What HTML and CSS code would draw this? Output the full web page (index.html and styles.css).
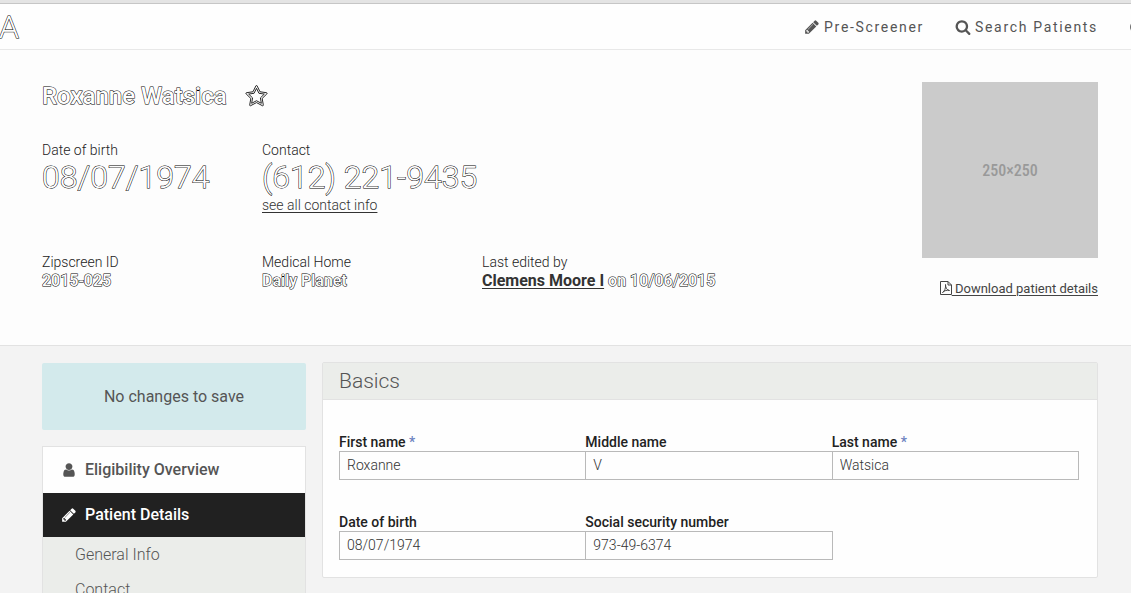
FILE: index.html
```html
<!DOCTYPE html>
<html lang="en">
<head>
<meta charset="utf-8">
<title>Patient Details</title>
<link rel="stylesheet" href="styles.css">
</head>
<body>
<svg class="sprite" aria-hidden="true">
  <symbol id="pencil" viewBox="0 0 1792 1792"><path d="M491 1536l91-91-235-235-91 91v107h128v128h107zm523-928q0-22-22-22-10 0-17 7l-542 542q-7 7-7 17 0 22 22 22 10 0 17-7l542-542q7-7 7-17zm-54-192l416 416-832 832h-416v-416zm683 96q0 53-37 90l-166 166-416-416 166-165q36-38 90-38 53 0 91 38l235 234q37 39 37 91z"/></symbol>
  <symbol id="search" viewBox="0 0 1792 1792"><path d="M1216 832q0-185-131.5-316.5t-316.5-131.5-316.5 131.5-131.5 316.5 131.5 316.5 316.5 131.5 316.5-131.5 131.5-316.5zm512 832q0 52-38 90t-90 38q-54 0-90-38l-343-342q-179 124-399 124-143 0-273.5-55.5t-225-150-150-225-55.5-273.5 55.5-273.5 150-225 225-150 273.5-55.5 273.5 55.5 225 150 150 225 55.5 273.5q0 220-124 399l343 343q37 37 37 90z"/></symbol>
  <symbol id="user" viewBox="0 0 1792 1792"><path d="M1536 1399q0 109-62.5 187t-150.5 78h-854q-88 0-150.5-78t-62.5-187q0-85 8.5-160.5t31.5-152 58.5-131 94-89 134.5-34.5q131 128 313 128t313-128q76 0 134.5 34.5t94 89 58.5 131 31.5 152 8.5 160.5zm-256-887q0 159-112.5 271.5t-271.5 112.5-271.5-112.5-112.5-271.5 112.5-271.5 271.5-112.5 271.5 112.5 112.5 271.5z"/></symbol>
  <symbol id="star" viewBox="0 0 1792 1792"><path d="M1201 1004l306-297-422-62-189-382-189 382-422 62 306 297-73 421 378-199 377 199zm527-357q0 22-26 48l-363 354 86 500q1 7 1 20 0 50-41 50-19 0-40-12l-449-236-449 236q-22 12-40 12-21 0-31.5-14.5t-10.5-35.5q0-6 2-20l86-500-364-354q-25-27-25-48 0-37 56-46l502-73 225-455q19-41 49-41t49 41l225 455 502 73q56 9 56 46z"/></symbol>
  <symbol id="pdf" viewBox="0 0 12 14"><path d="M.5 .5H8L11.500 4V13.500H.5ZM8 .5V4H11.500M2.500 11.500C4.500 10.500 6 7 5.500 3.500C5.500 7 7 9 9.500 9.500C7 8.800 4.500 9.500 2.500 11.500" fill="none" stroke="currentColor" stroke-linejoin="round"/></symbol>
  <symbol id="help" viewBox="0 0 14 14"><circle cx="7" cy="7" r="6"/></symbol>
</svg>
<div class="chrome"></div>
<header class="topbar">
  <a class="brand outlined" href="#">A</a>
  <nav class="nav">
    <a href="#"><svg class="icon"><use href="#pencil"/></svg>Pre-Screener</a>
    <a href="#"><svg class="icon"><use href="#search"/></svg>Search Patients</a>
    <a href="#" aria-label="Help"><svg class="icon"><use href="#help"/></svg></a>
  </nav>
</header>
<section class="hero">
  <div class="summary">
    <div class="title"><h1 class="outlined">Roxanne Watsica</h1><button class="star" type="button" aria-label="Favorite"><svg class="star-icon"><use href="#star"/></svg></button></div>
    <div class="facts">
      <div class="fact"><div>Date of birth</div><div class="big outlined">08/07/1974</div></div>
      <div class="fact wide"><div>Contact</div><div class="big outlined">(612) 221-9435</div><a class="link" href="#">see all contact info</a></div>
    </div>
    <div class="facts meta">
      <div class="fact"><div>Zipscreen ID</div><div class="value outlined">2015-025</div></div>
      <div class="fact"><div>Medical Home</div><div class="value outlined">Daily Planet</div></div>
      <div class="fact wide"><div>Last edited by</div><div class="value"><a class="link editor" href="#">Clemens Moore I</a> <span class="outlined">on 10/06/2015</span></div></div>
    </div>
  </div>
  <aside class="media">
    <div class="photo">250×250</div>
    <a class="link download" href="#"><svg class="pdf"><use href="#pdf"/></svg> Download patient details</a>
  </aside>
</section>
<main class="content">
  <aside class="sidebar">
    <button class="save" type="button">No changes to save</button>
    <nav class="menu">
      <a class="item" href="#"><svg class="icon"><use href="#user"/></svg>Eligibility Overview</a>
      <a class="item active" href="#"><svg class="icon"><use href="#pencil"/></svg>Patient Details</a>
      <div class="submenu"><a href="#">General Info</a><a href="#">Contact</a></div>
    </nav>
  </aside>
  <form class="card">
    <h2>Basics</h2>
    <div class="fields">
      <div class="field"><label for="first">First name <span class="required">*</span></label><input id="first" type="text" value="Roxanne"></div>
      <div class="field"><label for="middle">Middle name</label><input id="middle" type="text" value="V"></div>
      <div class="field"><label for="last">Last name <span class="required">*</span></label><input id="last" type="text" value="Watsica"></div>
      <div class="field"><label for="dob">Date of birth</label><input id="dob" type="text" value="08/07/1974"></div>
      <div class="field"><label for="ssn">Social security number</label><input id="ssn" type="text" value="973-49-6374"></div>
    </div>
  </form>
</main>
</body>
</html>
```
FILE: styles.css
```css
* { box-sizing: border-box; }
html { height: 100%; overflow: hidden; }
body {
  margin: 0;
  height: 100%;
  overflow: hidden;
  background: #f3f3f3;
  color: #222;
  font: 300 14px/20px Roboto, "Liberation Sans", sans-serif;
}
a { color: inherit; text-decoration: none; }
h1, h2 { margin: 0; }
.sprite { position: absolute; width: 0; height: 0; }
.icon { width: 16px; height: 16px; fill: currentColor; flex: none; }
.outlined { color: #fdfdfd; -webkit-text-stroke: 1px #000; paint-order: stroke fill; }

.chrome { height: 4px; background: #e4e4e4; border-bottom: 1px solid #c6c6c6; }
.topbar {
  display: flex;
  align-items: center;
  justify-content: space-between;
  height: 46px;
  background: #fefefe;
  border-bottom: 1px solid #e8e8e8;
  overflow: hidden;
}
.brand { margin-left: -1px; font-size: 32px; line-height: 44px; font-weight: 300; }
.nav { display: flex; gap: 31px; margin-right: -14px; color: #555; font-weight: 400; letter-spacing: 0.12em; }
.nav a { display: flex; align-items: center; gap: 4px; }

.hero {
  display: flex;
  justify-content: space-between;
  padding: 32px 33px 46px 42px;
  background: #fdfdfd;
  border-bottom: 1px solid #e2e2e2;
}
.summary { flex: 5; }
.title { display: flex; align-items: center; gap: 18px; height: 28px; }
h1 { font-size: 24px; line-height: 28px; font-weight: 500; }
.star { display: flex; padding: 0; border: 0; background: none; }
.star-icon { width: 23px; height: 23px; fill: #fdfdfd; stroke: #111; stroke-width: 70px; }
.facts { display: flex; margin-top: 30px; }
.fact { flex: 0 0 25%; }
.fact.wide { flex-basis: 50%; }
.big { font-size: 32px; line-height: 35px; }
.meta { margin-top: 37px; }
.value { font-size: 16px; line-height: 18px; font-weight: 500; }
.link { color: #333; text-decoration: underline; text-underline-offset: 2px; }
.editor { font-weight: 700; }
.media { flex: 1; text-align: right; }
.photo {
  display: flex;
  align-items: center;
  justify-content: center;
  aspect-ratio: 1;
  margin-bottom: 20px;
  background: #cbcbcb;
  color: #999;
  font: 500 16px "Roboto Condensed", Roboto, sans-serif;
}
.download { color: #444; font-size: 13px; font-weight: 400; white-space: nowrap; }
.pdf { width: 12px; height: 14px; vertical-align: -2px; }

.content {
  display: grid;
  grid-template-columns: 1fr 3fr;
  align-items: start;
  padding: 16px 33px 16px 42px;
}
.sidebar { padding-top: 1px; }
.save {
  display: block;
  width: 100%;
  padding: 23px;
  border: 0;
  border-radius: 2px;
  background: #d3eaec;
  color: #555;
  font: 400 16px/21px Roboto, sans-serif;
}
.menu { margin-top: 16px; border: 1px solid #e2e2e2; background: #ebedea; color: #555; font-size: 16px; }
.item { display: flex; align-items: center; gap: 8px; padding: 0 18px; height: 46px; background: #fefefe; font-weight: 500; }
.item.active { height: 44px; background: #212121; color: #fff; }
.submenu a { display: block; padding: 0 32px; line-height: 35px; }
.card { margin-left: 16px; border: 1px solid #e2e2e2; border-radius: 2px; background: #fefefe; }
h2 {
  padding: 4px 16px;
  background: #ebedea;
  border-bottom: 1px solid #e2e2e2;
  color: #555;
  font-size: 21px;
  line-height: 28px;
  font-weight: 300;
}
.fields { display: grid; grid-template-columns: repeat(3, 1fr); row-gap: 34px; padding: 34px 19px 17px 16px; }
.field { margin-right: -1px; }
label { display: block; line-height: 17px; font-weight: 500; }
.required { color: #6c82c0; }
input {
  display: block;
  width: 100%;
  height: 29px;
  padding: 0 7px 1px;
  border: 1px solid #b9b9b9;
  border-radius: 0;
  background: #fefefe;
  color: #333;
  font: 300 14px/20px Roboto, sans-serif;
}
```
